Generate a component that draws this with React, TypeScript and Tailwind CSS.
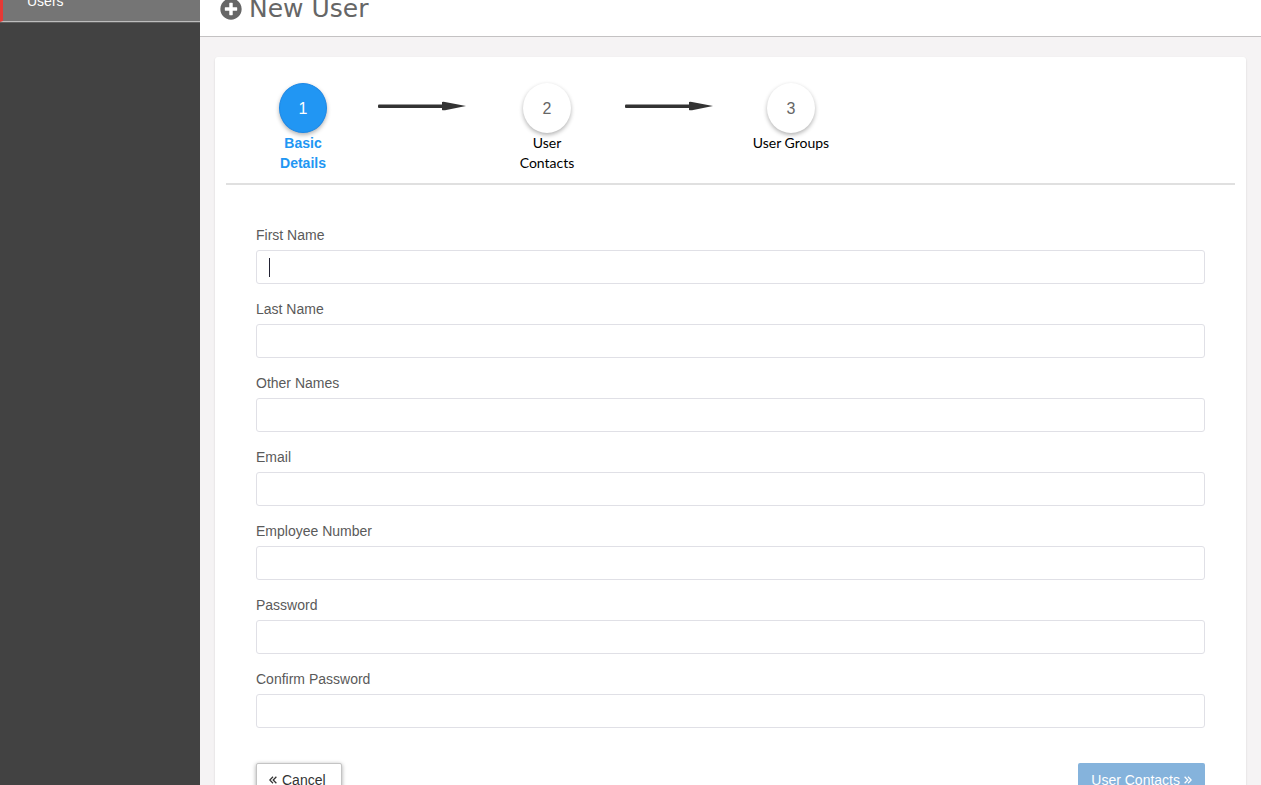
import React from 'react';
import { FaPlusCircle } from 'react-icons/fa';

const fields = [
  { id: 'firstName', label: 'First Name', type: 'text' },
  { id: 'lastName', label: 'Last Name', type: 'text' },
  { id: 'otherNames', label: 'Other Names', type: 'text' },
  { id: 'email', label: 'Email', type: 'email' },
  { id: 'employeeNumber', label: 'Employee Number', type: 'text' },
  { id: 'password', label: 'Password', type: 'password' },
  { id: 'confirmPassword', label: 'Confirm Password', type: 'password' },
];

function Arrow() {
  return (
    <svg className="mt-[18px] h-[10px] w-[88px]" viewBox="0 0 88 10" fill="#333" aria-hidden="true">
      <rect x="0" y="3.4" width="66" height="3.6" rx="1" />
      <path d="M64 1 Q65 .5 67 .9 L88 5 L67 9.2 Q65 9.6 64 9 Z" />
    </svg>
  );
}

function DoubleAngle({ right = false }: { right?: boolean }) {
  return (
    <svg
      className={right ? 'size-2 rotate-180' : 'size-2'}
      viewBox="0 0 9 9"
      fill="none"
      stroke="currentColor"
      strokeWidth="1.4"
      aria-hidden="true"
    >
      <path d="M4.5 .8 .9 4.5 4.5 8.2M8.3 .8 4.7 4.5 8.3 8.2" />
    </svg>
  );
}

function Step({ number, children, active = false }: { number: number; children: React.ReactNode; active?: boolean }) {
  return (
    <li className={active ? 'flex w-[76px] flex-col items-center' : 'flex w-[90px] flex-col items-center'}>
      <button
        type="button"
        aria-label={`Step ${number}`}
        className={
          active
            ? 'h-[50px] w-12 rounded-[50%] border border-[#1e88e5] bg-[#2196f3] pt-0.5 text-base text-white shadow-[0_2px_4px_rgba(0,0,0,0.3)]'
            : 'h-[50px] w-12 rounded-[50%] bg-white pt-0.5 text-base text-[#666] shadow-[0_2px_4px_rgba(0,0,0,0.3)]'
        }
      >
        {number}
      </button>
      <span
        className={
          active
            ? 'text-center text-sm leading-5 font-bold text-[#2196f3]'
            : 'text-center font-[Lato,sans-serif] text-sm leading-5 whitespace-nowrap text-black'
        }
      >
        {children}
      </span>
    </li>
  );
}

export default function App() {
  return (
    <div className="flex h-screen overflow-hidden bg-[#f5f3f4] font-['Liberation_Sans',Arial,sans-serif] text-sm text-[#5a5a5a]">
      <nav className="w-[200px] shrink-0 bg-[#424242]">
        <a
          href="#users"
          className="flex h-[22px] items-end border-b border-l-[3px] border-b-[#bdbdbd] border-l-[#e53935] bg-[#757575] pb-[10px] pl-6 leading-5 text-white shadow-[0_1px_0_#616161]"
        >
          Users
        </a>
      </nav>
      <main className="min-w-0 flex-1">
        <header className="flex h-[37px] items-end border-b border-[#c4c2c3] bg-white px-5 pb-[11px]">
          <h1 className="flex items-center gap-[7px] font-['DejaVu_Sans',sans-serif] text-[25px] leading-8 text-[#666]">
            <FaPlusCircle className="size-[22px]" aria-hidden="true" />
            New User
          </h1>
        </header>
        <section className="mx-[15px] mt-5 rounded-[3px] bg-white px-[11px] pt-[26px] pb-10 shadow-[0_1px_2px_rgba(0,0,0,0.15)]">
          <ol className="flex border-b-2 border-[#e0e0e0] pb-[10px] pl-[39px]">
            <Step number={1} active>
              Basic
              <br />
              Details
            </Step>
            <li className="flex w-[161px] justify-center" aria-hidden="true">
              <Arrow />
            </li>
            <Step number={2}>
              User
              <br />
              Contacts
            </Step>
            <li className="flex w-[154px] justify-center" aria-hidden="true">
              <Arrow />
            </li>
            <Step number={3}>User Groups</Step>
          </ol>
          <form className="px-[30px] pt-10" onSubmit={(e) => e.preventDefault()}>
            {fields.map((field, i) => (
              <div key={field.id} className="mb-[15px]">
                <label htmlFor={field.id} className="mb-[5px] block leading-5">
                  {field.label}
                </label>
                <div className="relative">
                  <input
                    id={field.id}
                    type={field.type}
                    className="block h-[34px] w-full rounded-[3px] border border-[#e0e0e6] bg-white px-3 outline-none"
                  />
                  {i === 0 && <span className="absolute top-2 left-[13px] h-[19px] w-px bg-[#222233]" aria-hidden="true" />}
                </div>
              </div>
            ))}
            <div className="flex justify-between pt-5">
              <button
                type="button"
                className="flex h-[34px] min-w-[86px] items-center gap-[5px] rounded-[2px] border border-[#c4c4c4] bg-white px-3 text-[#333] shadow-[0_1px_4px_rgba(0,0,0,0.35)]"
              >
                <DoubleAngle />
                Cancel
              </button>
              <button
                type="submit"
                className="flex h-[34px] items-center gap-1 rounded-[2px] bg-[#85b3dc] px-[13px] text-white"
              >
                User Contacts
                <DoubleAngle right />
              </button>
            </div>
          </form>
        </section>
      </main>
    </div>
  );
}
